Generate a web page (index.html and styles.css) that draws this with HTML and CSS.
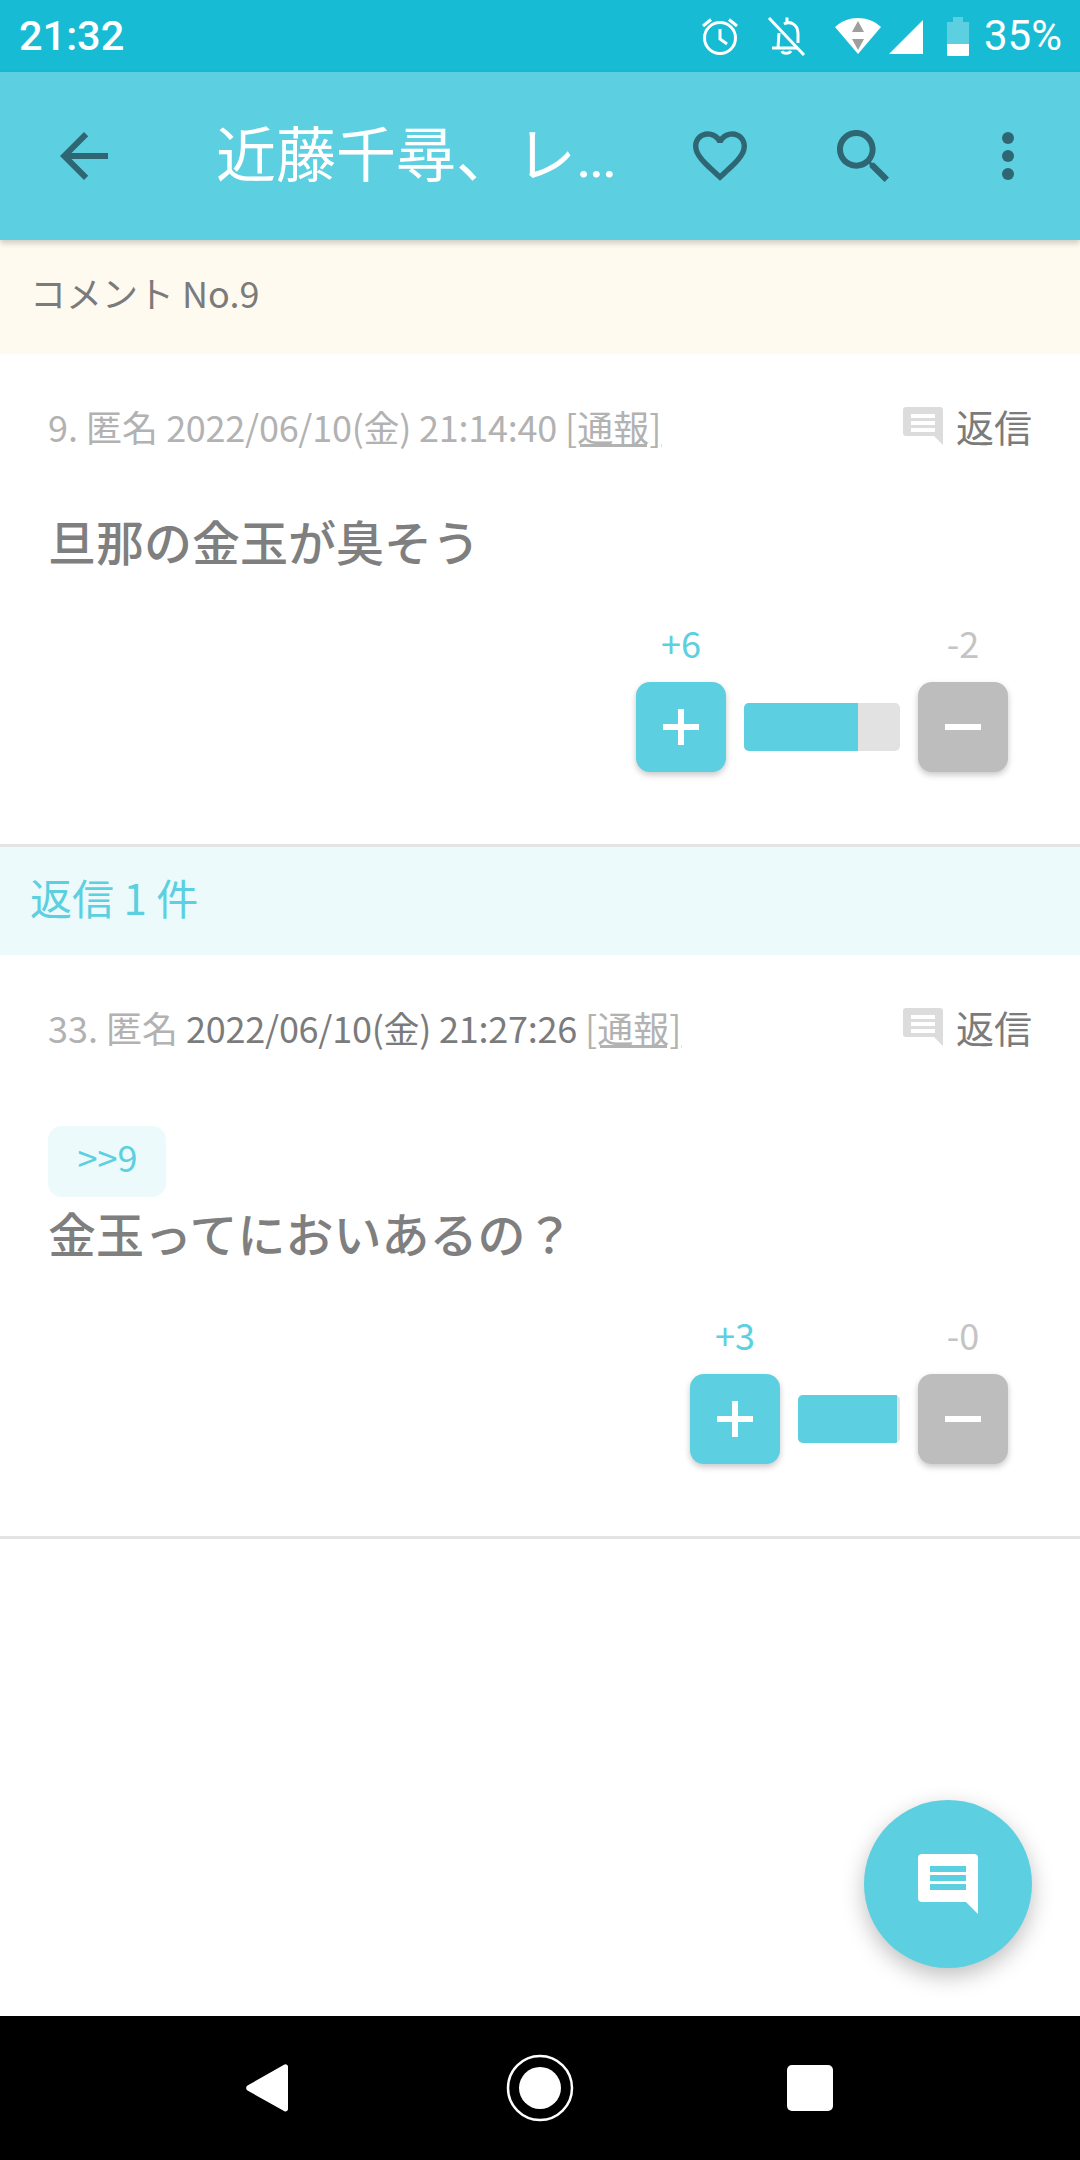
FILE: index.html
```html
<!DOCTYPE html>
<html lang="ja">
<head>
  <meta charset="UTF-8" />
  <meta name="viewport" content="width=device-width, initial-scale=1.0" />
  <title>コメント No.9</title>
  <link rel="stylesheet" href="styles.css">
</head>
<body>
  <!-- Status bar -->
  <div class="status-bar">
    <span class="clock">21:32</span>
    <div class="status-icons">
      <svg class="ic-alarm" width="36" height="38" viewBox="0 0 36 38" fill="none" stroke="#fff" stroke-width="3">
        <circle cx="18" cy="21" r="15.5"/>
        <path d="M18 12v10l7 5M1 9l8-6.5M35 9l-8-6.5"/>
      </svg>
      <svg class="ic-bell" width="40" height="40" viewBox="0 0 40 40" fill="none" stroke="#fff" stroke-width="3">
        <path d="M2 2l35 37"/>
        <path d="M5 32h26M12 17l-1 15M17 8c5-3 14-1 14 10v9"/>
        <path d="M20 7V1.500M15 35c1 3 7 3 9 0"/>
      </svg>
      <svg class="ic-wifi" width="46" height="36" viewBox="0 0 46 36">
        <path d="M0 9C13-3 33-3 46 9L23 36z" fill="#fff"/>
        <path d="M23 3l6 11H17zM23 32l-6-11h12z" fill="#9e9e9e"/>
      </svg>
      <svg class="ic-signal" width="34" height="34" viewBox="0 0 34 34">
        <path d="M34 0v34H0z" fill="#fff"/>
      </svg>
      <svg class="ic-battery" width="22" height="39" viewBox="0 0 22 39">
        <path d="M6 0h10v5h6v27H0V5h6z" fill="#5ccfe0"/>
        <path d="M0 27h22v11a1 1 0 0 1-1 1H1a1 1 0 0 1-1-1z" fill="#fff"/>
      </svg>
      <span class="battery-pct">35%</span>
    </div>
  </div>

  <!-- Toolbar -->
  <header class="toolbar">
    <svg class="ic-back" width="48" height="48" viewBox="4 4 16 16" fill="#2f6673">
      <path d="M20 11H7.830l5.590-5.590L12 4l-8 8 8 8 1.410-1.410L7.830 13H20v-2z"/>
    </svg>
    <h1 class="toolbar-title">近藤千尋、レ<span class="dots">...</span></h1>
    <svg class="ic-heart" width="54" height="50" viewBox="2 3 20 18.350" fill="#2f6673">
      <path d="M16.500 3c-1.740 0-3.410.81-4.500 2.090C10.910 3.810 9.240 3 7.500 3 4.420 3 2 5.420 2 8.500c0 3.780 3.400 6.860 8.550 11.540L12 21.350l1.450-1.320C18.600 15.360 22 12.280 22 8.500 22 5.420 19.580 3 16.500 3zm-4.400 15.550l-.1.1-.1-.1C7.140 14.240 4 11.390 4 8.500 4 6.500 5.500 5 7.500 5c1.540 0 3.040.99 3.570 2.360h1.870C13.460 5.990 14.960 5 16.500 5c2 0 3.500 1.500 3.500 3.500 0 2.890-3.140 5.740-7.900 10.050z"/>
    </svg>
    <svg class="ic-search" width="52" height="52" viewBox="3 3 17.490 17.490" fill="#2f6673">
      <path d="M15.500 14h-.79l-.28-.27C15.410 12.590 16 11.110 16 9.500 16 5.910 13.090 3 9.500 3S3 5.910 3 9.500 5.910 16 9.500 16c1.610 0 3.090-.59 4.230-1.570l.27.28v.79l5 4.990L20.490 19l-4.990-5zm-6 0C7.010 14 5 11.990 5 9.500S7.010 5 9.500 5 14 7.010 14 9.500 11.990 14 9.500 14z"/>
    </svg>
    <svg class="ic-more" width="12" height="48" viewBox="0 0 12 48" fill="#2f6673">
      <circle cx="6" cy="6" r="6"/><circle cx="6" cy="24" r="6"/><circle cx="6" cy="42" r="6"/>
    </svg>
  </header>

  <main class="content">
    <div class="sub-header">コメント No.9</div>

    <!-- Parent comment -->
    <section class="comment comment-parent">
      <div class="comment-head">
        <p class="meta">9. 匿名 <span class="meta-num">2022/06/10(金) 21:14:40</span> <u>[通報]</u></p>
        <div class="reply-link">
          <svg width="40" height="38" viewBox="0 0 40 38" fill="#dcdcdc">
            <path d="M3 0h34a3 3 0 0 1 3 3v35l-9-9H3a3 3 0 0 1-3-3V3a3 3 0 0 1 3-3z"/>
            <path d="M8 7h24v4H8zM8 14h24v4H8zM8 21h24v4H8z" fill="#fff"/>
          </svg>
          <span>返信</span>
        </div>
      </div>
      <p class="comment-body">旦那の金玉が臭そう</p>
      <div class="vote">
        <div class="vote-col">
          <span class="count count-plus">+6</span>
          <div class="vote-btn btn-plus">
            <svg width="36" height="36" viewBox="0 0 36 36" fill="#fff"><path d="M15 0h6v15h15v6H21v15h-6V21H0v-6h15z"/></svg>
          </div>
        </div>
        <div class="bar bar-wide"><div class="bar-fill" style="width: 73%"></div></div>
        <div class="vote-col">
          <span class="count count-minus">-2</span>
          <div class="vote-btn btn-minus">
            <svg width="36" height="6" viewBox="0 0 36 6" fill="#fff"><path d="M0 0h36v6H0z"/></svg>
          </div>
        </div>
      </div>
    </section>

    <div class="reply-count">返信 1 件</div>

    <!-- Reply -->
    <section class="comment comment-reply">
      <div class="comment-head">
        <p class="meta">33. 匿名 <span class="meta-num meta-date">2022/06/10(金) 21:27:26</span> <u>[通報]</u></p>
        <div class="reply-link">
          <svg width="40" height="38" viewBox="0 0 40 38" fill="#dcdcdc">
            <path d="M3 0h34a3 3 0 0 1 3 3v35l-9-9H3a3 3 0 0 1-3-3V3a3 3 0 0 1 3-3z"/>
            <path d="M8 7h24v4H8zM8 14h24v4H8zM8 21h24v4H8z" fill="#fff"/>
          </svg>
          <span>返信</span>
        </div>
      </div>
      <span class="anchor">&gt;&gt;9</span>
      <p class="comment-body body-after-anchor">金玉ってにおいあるの？</p>
      <div class="vote">
        <div class="vote-col">
          <span class="count count-plus">+3</span>
          <div class="vote-btn btn-plus">
            <svg width="36" height="36" viewBox="0 0 36 36" fill="#fff"><path d="M15 0h6v15h15v6H21v15h-6V21H0v-6h15z"/></svg>
          </div>
        </div>
        <div class="bar bar-narrow"><div class="bar-fill" style="width: 97%"></div></div>
        <div class="vote-col">
          <span class="count count-minus">-0</span>
          <div class="vote-btn btn-minus">
            <svg width="36" height="6" viewBox="0 0 36 6" fill="#fff"><path d="M0 0h36v6H0z"/></svg>
          </div>
        </div>
      </div>
    </section>

    <!-- Floating button -->
    <div class="fab">
      <svg width="60" height="60" viewBox="0 0 60 60" fill="#fff">
        <path d="M4 0h52a4 4 0 0 1 4 4v56L48 48H4a4 4 0 0 1-4-4V4a4 4 0 0 1 4-4z"/>
        <path d="M12 12h36v6H12zM12 21h36v6H12zM12 30h36v6H12z" fill="#5ccfe0"/>
      </svg>
    </div>
  </main>

  <!-- Navigation bar -->
  <nav class="nav-bar">
    <svg class="nav-back" width="42" height="48" viewBox="0 0 42 48" fill="#fff">
      <path d="M38.500.5A2.500 2.500 0 0 1 42 3v42a2.500 2.500 0 0 1-3.500 2.300L1.500 26.500a3 3 0 0 1 0-5z"/>
    </svg>
    <svg class="nav-home" width="68" height="68" viewBox="0 0 68 68">
      <circle cx="34" cy="34" r="32" fill="none" stroke="#fff" stroke-width="2.500"/>
      <circle cx="34" cy="34" r="21" fill="#fff"/>
    </svg>
    <div class="nav-recent"></div>
  </nav>
</body>
</html>
```

FILE: styles.css
```css
* {
  box-sizing: border-box;
}
body {
  margin: 0;
  width: 1080px;
  height: 2160px;
  display: flex;
  flex-direction: column;
  overflow: hidden;
  background: #fff;
  font-family: "Noto Sans CJK JP", "Noto Sans", sans-serif;
}
p, h1 {
  margin: 0;
  font-weight: 400;
}

/* status bar */
.status-bar {
  height: 72px;
  flex: none;
  display: flex;
  align-items: center;
  justify-content: space-between;
  padding: 0 18px 0 19px;
  background: #17bcd4;
  color: #fff;
  font-family: Roboto, sans-serif;
  font-weight: 500;
}
.clock {
  font-size: 41.500px;
  line-height: 72px;
}
.status-icons {
  display: flex;
  align-items: center;
}
.ic-alarm { margin-right: 29px; }
.ic-bell { margin-right: 28px; }
.ic-wifi { margin-right: 8px; margin-top: -1px; }
.ic-signal { margin-right: 24px; margin-top: 2px; }
.ic-battery { margin-right: 15px; }
.battery-pct {
  font-size: 42px;
  font-weight: 400;
  line-height: 72px;
}

/* toolbar */
.toolbar {
  height: 168px;
  flex: none;
  display: flex;
  align-items: center;
  padding-left: 60px;
  background: #5ccfe0;
  box-shadow: 0 3px 6px rgba(0, 0, 0, 0.2);
  position: relative;
  z-index: 1;
}
.toolbar-title {
  width: 477px;
  margin-left: 108px;
  margin-bottom: 5px;
  color: #fff;
  font-size: 60px;
  line-height: 80px;
  white-space: nowrap;
}
.dots {
  font-family: Roboto, sans-serif;
  letter-spacing: -3px;
}
.ic-search { margin-left: 90px; }
.ic-more { margin-left: 113px; }

/* content */
.content {
  flex: 1;
  position: relative;
}
.sub-header {
  height: 114px;
  padding-left: 30px;
  background: #fffaf0;
  color: #7b7b7b;
  font-size: 36px;
  line-height: 105px;
}
.comment {
  border-bottom: 3px solid #e4e4e4;
  padding: 47px 0 0 48px;
}
.comment-parent { height: 493px; }
.comment-reply { height: 584px; }
.comment-head {
  display: flex;
  justify-content: space-between;
  align-items: center;
  padding-right: 48px;
  height: 50px;
}
.meta {
  color: #b2b2b2;
  font-size: 36px;
  line-height: 50px;
  white-space: nowrap;
}
.meta-num {
  letter-spacing: -0.25px;
}
.meta-date {
  color: #7b7b7b;
}
.reply-link {
  display: flex;
  align-items: center;
  gap: 13px;
  color: #7b7b7b;
  font-size: 38px;
  line-height: 50px;
}
.comment-body {
  margin-top: 59px;
  color: #7f7f7f;
  font-size: 48px;
  font-weight: 500;
  line-height: 60px;
}
.anchor {
  display: block;
  width: 118px;
  height: 71px;
  margin-top: 74px;
  padding-left: 1px;
  background: #ecfafc;
  border-radius: 14px;
  color: #5ccfe0;
  font-size: 36px;
  line-height: 60px;
  text-align: center;
}
.body-after-anchor {
  margin-top: 5px;
}

/* votes */
.vote {
  display: flex;
  justify-content: flex-end;
  align-items: flex-end;
  gap: 18px;
  margin-top: 47px;
  padding-right: 72px;
}
.vote-col {
  display: flex;
  flex-direction: column;
  align-items: center;
  width: 90px;
}
.count {
  font-size: 36px;
  line-height: 50px;
  margin-bottom: 15px;
}
.count-plus { color: #5ccfe0; }
.count-minus { color: #c4c4c4; }
.vote-btn {
  width: 90px;
  height: 90px;
  border-radius: 14px;
  display: flex;
  align-items: center;
  justify-content: center;
  box-shadow: 0 3px 6px rgba(0, 0, 0, 0.22);
}
.btn-plus { background: #5ccfe0; }
.btn-minus { background: #bdbdbd; }
.bar {
  height: 48px;
  margin-bottom: 21px;
  background: #e2e2e2;
  border-radius: 5px;
  overflow: hidden;
}
.bar-wide { width: 156px; }
.bar-narrow { width: 102px; }
.bar-fill {
  height: 100%;
  background: #5ccfe0;
}

.reply-count {
  height: 108px;
  padding-left: 30px;
  background: #ecfafc;
  color: #5ccfe0;
  font-size: 42px;
  line-height: 100px;
}

/* floating button */
.fab {
  position: absolute;
  left: 864px;
  top: 1560px;
  width: 168px;
  height: 168px;
  border-radius: 50%;
  background: #5ccfe0;
  box-shadow: 0 8px 22px rgba(0, 0, 0, 0.25);
  display: flex;
  align-items: center;
  justify-content: center;
}

/* nav bar */
.nav-bar {
  height: 144px;
  flex: none;
  display: flex;
  align-items: center;
  padding-left: 246px;
  background: #000;
}
.nav-home { margin-left: 218px; margin-right: 213px; }
.nav-back { margin-top: -1px; }
.nav-recent {
  width: 46px;
  height: 46px;
  margin-top: -1px;
  border-radius: 5px;
  background: #fff;
}
```
